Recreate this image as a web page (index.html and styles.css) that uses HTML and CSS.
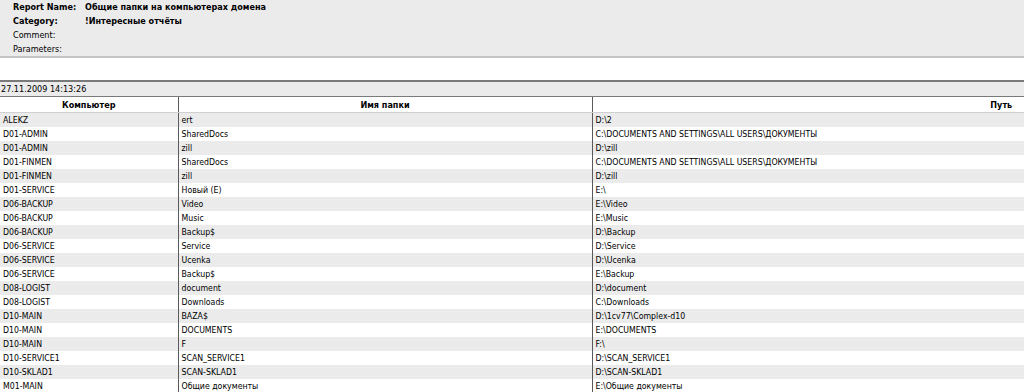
FILE: index.html
```html
<!DOCTYPE html>
<html lang="ru">
<head>
<meta charset="utf-8">
<title>Общие папки на компьютерах домена</title>
<link rel="stylesheet" href="styles.css">
</head>
<body>
<div class="report-head">
  <div class="meta-row"><span class="meta-label bold">Report Name:</span><span class="meta-value bold">Общие папки на компьютерах домена</span></div>
  <div class="meta-row"><span class="meta-label bold">Category:</span><span class="meta-value bold">!Интересные отчёты</span></div>
  <div class="meta-row"><span class="meta-label">Comment:</span><span class="meta-value"></span></div>
  <div class="meta-row"><span class="meta-label">Parameters:</span><span class="meta-value"></span></div>
</div>
<div class="table-wrap">
<table class="data">
  <colgroup><col class="c1"><col class="c2"><col class="c3"></colgroup>
  <thead>
    <tr class="date-row"><td colspan="3">27.11.2009 14:13:26</td></tr>
    <tr class="head-row"><th>Компьютер</th><th>Имя папки</th><th>Путь</th></tr>
  </thead>
  <tbody>
    <tr><td>ALEKZ</td><td>ert</td><td>D:\2</td></tr>
    <tr><td>D01-ADMIN</td><td>SharedDocs</td><td>C:\DOCUMENTS AND SETTINGS\ALL USERS\ДОКУМЕНТЫ</td></tr>
    <tr><td>D01-ADMIN</td><td>zill</td><td>D:\zill</td></tr>
    <tr><td>D01-FINMEN</td><td>SharedDocs</td><td>C:\DOCUMENTS AND SETTINGS\ALL USERS\ДОКУМЕНТЫ</td></tr>
    <tr><td>D01-FINMEN</td><td>zill</td><td>D:\zill</td></tr>
    <tr><td>D01-SERVICE</td><td>Новый (E)</td><td>E:\</td></tr>
    <tr><td>D06-BACKUP</td><td>Video</td><td>E:\Video</td></tr>
    <tr><td>D06-BACKUP</td><td>Music</td><td>E:\Music</td></tr>
    <tr><td>D06-BACKUP</td><td>Backup$</td><td>D:\Backup</td></tr>
    <tr><td>D06-SERVICE</td><td>Service</td><td>D:\Service</td></tr>
    <tr><td>D06-SERVICE</td><td>Ucenka</td><td>D:\Ucenka</td></tr>
    <tr><td>D06-SERVICE</td><td>Backup$</td><td>E:\Backup</td></tr>
    <tr><td>D08-LOGIST</td><td>document</td><td>D:\document</td></tr>
    <tr><td>D08-LOGIST</td><td>Downloads</td><td>C:\Downloads</td></tr>
    <tr><td>D10-MAIN</td><td>BAZA$</td><td>D:\1cv77\Complex-d10</td></tr>
    <tr><td>D10-MAIN</td><td>DOCUMENTS</td><td>E:\DOCUMENTS</td></tr>
    <tr><td>D10-MAIN</td><td>F</td><td>F:\</td></tr>
    <tr><td>D10-SERVICE1</td><td>SCAN_SERVICE1</td><td>D:\SCAN_SERVICE1</td></tr>
    <tr><td>D10-SKLAD1</td><td>SCAN-SKLAD1</td><td>D:\SCAN-SKLAD1</td></tr>
    <tr><td>M01-MAIN</td><td>Общие документы</td><td>E:\Общие документы</td></tr>
  </tbody>
</table>
</div>
</body>
</html>
```
FILE: styles.css
```css
html, body {
  margin: 0;
  padding: 0;
  background: #ffffff;
  overflow: hidden;
}
body {
  font-family: "DejaVu Sans", "Liberation Sans", sans-serif;
  font-stretch: condensed;
  font-size: 9px;
  color: #000000;
}
.report-head {
  background: #ebebeb;
  border-bottom: 2px solid #c4c4c4;
  height: 58px;
  padding: 0 0 0 13px;
  box-sizing: border-box;
}
.meta-row {
  display: flex;
  height: 14px;
  line-height: 14px;
  white-space: nowrap;
}
.meta-label {
  width: 72px;
  flex: none;
}
.bold {
  font-weight: bold;
}
.table-wrap {
  margin-top: 22px;
  width: 100%;
  overflow: hidden;
}
.data {
  border-collapse: collapse;
  table-layout: fixed;
  width: 1410px;
}
.c1 { width: 178px; }
.c2 { width: 414px; }
.c3 { width: 818px; }
.data td, .data th {
  padding: 0 0 0 3px;
  height: 14px;
  line-height: 14px;
  font-size: 8.7px;
  white-space: nowrap;
  overflow: hidden;
  text-align: left;
  font-weight: normal;
  border-left: 1px solid #5a5a5a;
}
.data td:first-child, .data th:first-child {
  border-left: none;
}
.date-row td {
  background: #ebebeb;
  border-top: 2px solid #7a7a7a;
  border-bottom: 1px solid #7a7a7a;
  height: 13px;
  padding-left: 1px;
  font-size: 9px;
}
.head-row th {
  font-weight: bold;
  text-align: center;
  height: 15px;
  padding: 0;
  font-size: 9px;
  border-bottom: 1px solid #d0d0d0;
}
.data tbody tr:nth-child(odd) td {
  background: #ebebeb;
}
```
